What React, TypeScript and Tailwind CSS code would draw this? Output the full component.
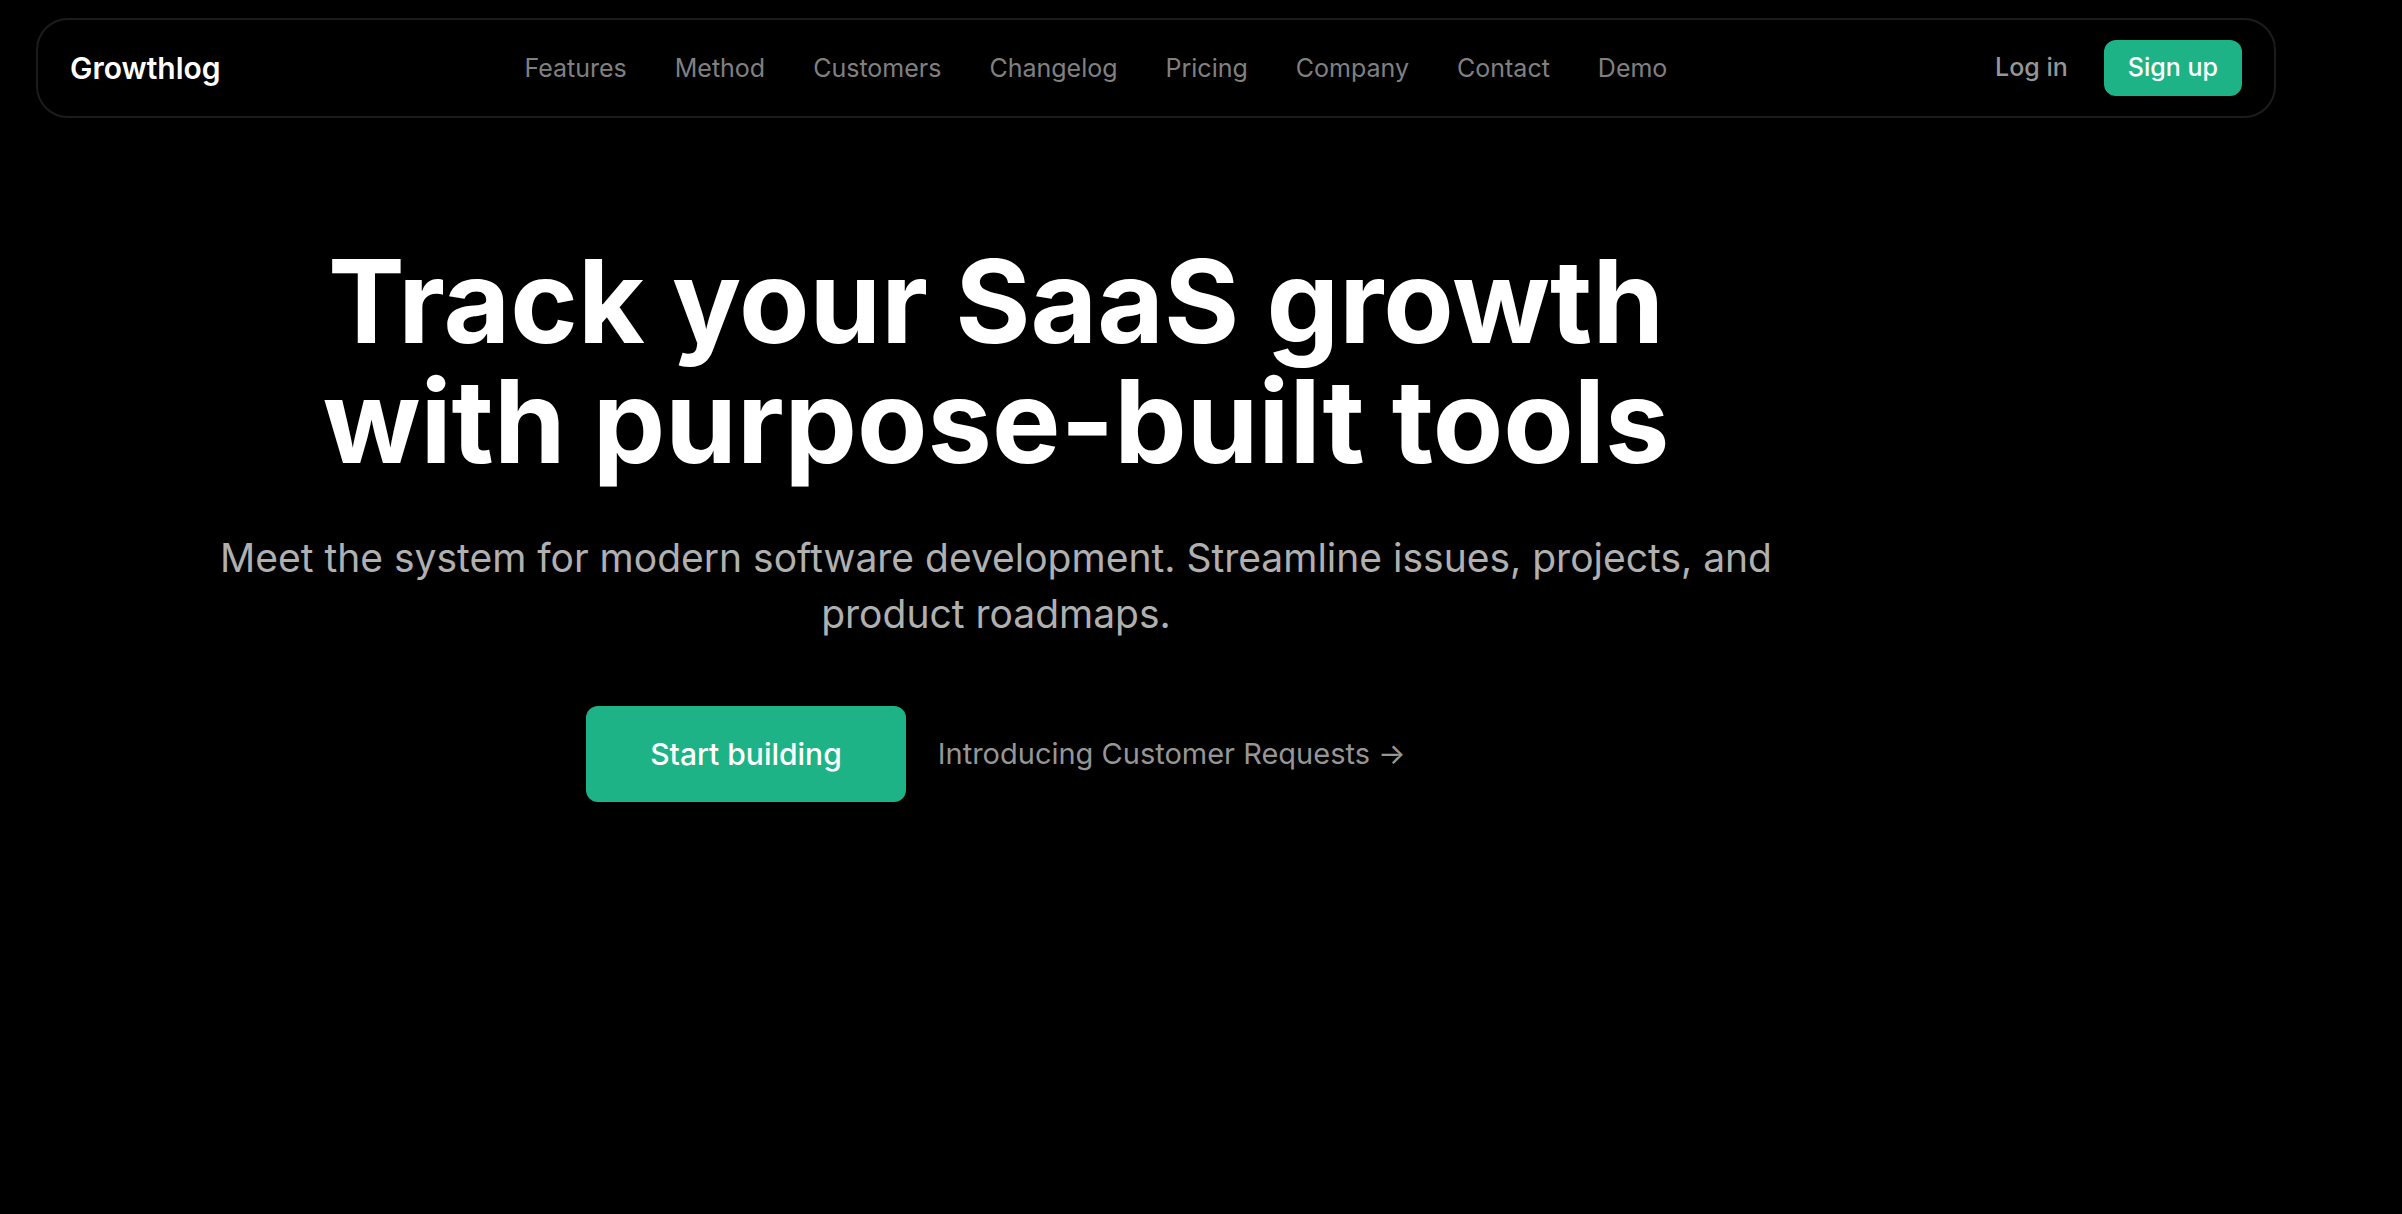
const navLinks = [
  "Features",
  "Method",
  "Customers",
  "Changelog",
  "Pricing",
  "Company",
  "Contact",
  "Demo",
];

function Header() {
  return (
    <header className="flex min-h-[100px] flex-wrap items-center justify-between gap-x-8 gap-y-4 rounded-[32px] border-2 border-[#1c1c1c] px-8 py-5">
      <a href="#home" className="text-[30px] leading-10 font-semibold text-white">
        Growthlog
      </a>
      <nav aria-label="Main" className="flex flex-wrap items-center gap-x-12 gap-y-2">
        {navLinks.map((label) => (
          <a
            key={label}
            href={`#${label.toLowerCase()}`}
            className="text-[25px] leading-10 text-[#808080]"
          >
            {label}
          </a>
        ))}
      </nav>
      <div className="flex items-center gap-3">
        <button type="button" className="h-14 px-6 text-[25px] font-medium text-[#969696]">
          Log in
        </button>
        <button
          type="button"
          className="h-14 rounded-xl bg-[#1eb386] px-6 text-[25px] font-medium text-white"
        >
          Sign up
        </button>
      </div>
    </header>
  );
}

function Hero() {
  return (
    <section className="flex max-w-[1920px] flex-col items-center pt-31 text-center">
      <h1 className="text-[115px] leading-[120px] font-bold text-white">
        Track your SaaS growth
        <br />
        with purpose-built tools
      </h1>
      <p className="mt-12 max-w-[1600px] text-[39px] leading-14 text-[#b0b0b0]">
        Meet the system for modern software development. Streamline issues, projects, and product
        roadmaps.
      </p>
      <div className="mt-16 flex flex-wrap items-center justify-center gap-8">
        <button
          type="button"
          className="h-24 rounded-xl bg-[#1eb386] px-16 text-[30px] font-medium text-white"
        >
          Start building
        </button>
        <a href="#customer-requests" className="text-[29px] leading-10 text-[#969696]">
          Introducing Customer Requests →
        </a>
      </div>
    </section>
  );
}

export default function App() {
  return (
    <div className="min-h-screen bg-black pt-[18px] pr-[126px] pb-16 pl-9 font-['Inter',sans-serif] antialiased">
      <Header />
      <main>
        <Hero />
      </main>
    </div>
  );
}
